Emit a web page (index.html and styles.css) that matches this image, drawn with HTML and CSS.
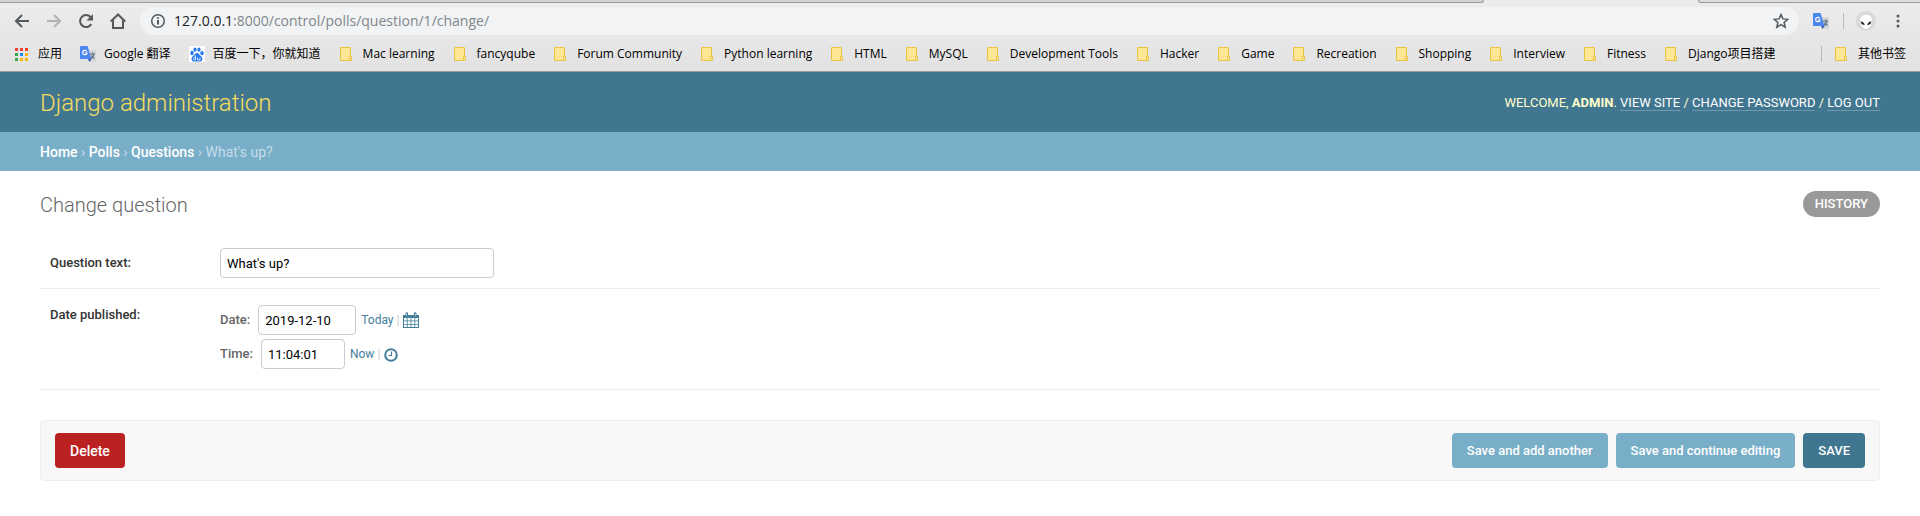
FILE: index.html
```
<!DOCTYPE html>
<html lang="en">
<head>
<meta charset="utf-8">
<title>Change question | Django site admin</title>
<link rel="stylesheet" href="styles.css">
</head>
<body>
<svg class="defs" aria-hidden="true">
  <symbol id="folder" viewBox="0 0 16 16"><path d="M1.500 1.500h10v13h-10z" fill="#ffe694" stroke="#e8c444"/><path d="M10.500 10.500h2v4h-2z" fill="#ffe694" stroke="#e8c444"/></symbol>
  <symbol id="translate" viewBox="0 0 16 16"><path d="M7 4h8.500q.5 0 .5.5v11q0 .5-.5.500H9z" fill="#d4d6d8"/><path d="M1 0h6.500l4 13H1q-1 0-1-1V1q0-1 1-1z" fill="#4a86f0"/><path d="M8 13h3.500L9.500 16z" fill="#3454b4"/><path d="M6.700 5.300A2.200 2.200 0 1 0 7 7H5" fill="none" stroke="#fff" stroke-width="1.200"/><path d="M10 8h5M12.700 6.500V8M14 8q-.8 3-3 4.500M11.500 9.500q1 2 3 3" fill="none" stroke="#587084" stroke-width="1.200"/></symbol>
</svg>
<div class="browser">
  <div class="tabs"><span class="tab-left"></span><span class="tab-right"></span></div>
  <div class="toolbar">
    <button class="tool" aria-label="Back"><svg viewBox="0 0 16 16"><path d="M15 8H2M8 2L2 8l6 6" stroke="#55585c"/></svg></button>
    <button class="tool" aria-label="Forward"><svg viewBox="0 0 16 16"><path d="M1 8h13M8 2l6 6-6 6" stroke="#b0b2b4"/></svg></button>
    <button class="tool" aria-label="Reload"><svg viewBox="0 0 16 16"><path d="M13.300 11A6 6 0 1 1 12.500 4" stroke="#55585c"/><path d="M15 1v6.500H8.500z" fill="#55585c"/></svg></button>
    <button class="tool" aria-label="Home"><svg viewBox="0 0 16 16"><path d="M.8 8.500L8 1.500l7.200 7M3 7v8h10V7" stroke="#55585c"/></svg></button>
    <div class="omnibox">
      <svg class="info" viewBox="0 0 16 16"><circle cx="8" cy="8" r="6.300"/><path d="M8 7v4.500M8 4.200v1.600"/></svg>
      <span class="url"><b>127.0.0.1</b>:8000/control/polls/question/1/change/</span>
      <svg class="star" viewBox="0 0 16 16"><path d="M8 1.500l1.900 4.400 4.800.4-3.600 3.200 1.100 4.700L8 11.700l-4.200 2.500 1.100-4.700L1.300 6.300l4.800-.4z"/></svg>
    </div>
    <svg class="ext" viewBox="0 0 16 16"><use href="#translate"/></svg>
    <span class="divider"></span>
    <svg class="avatar" viewBox="0 0 20 20"><circle cx="10" cy="10" r="10" fill="#d9d9d9"/><path d="M10 4c4 0 6 2 6 5.500 0 4-3 8.500-6 8.500s-6-4.500-6-8.500C4 6 6 4 10 4z" fill="#fff"/><path d="M4.500 10.500q3.500 0 4.300 3.500-3.500 0-4.300-3.500zM15.500 10.500q-3.500 0-4.300 3.500 3.500 0 4.300-3.500z" fill="#222"/></svg>
    <svg class="menu" viewBox="0 0 16 16"><circle cx="8" cy="3" r="1.500"/><circle cx="8" cy="8" r="1.500"/><circle cx="8" cy="13" r="1.500"/></svg>
  </div>
  <nav class="bookmarks">
    <a href="#"><svg viewBox="0 0 16 16"><path d="M1 2h3v3H1zM6 2h3v3H6zM11 2h3v3h-3z" fill="#ea4335"/><path d="M1 7h3v3H1zM1 12h3v3H1z" fill="#34a853"/><path d="M6 7h3v3H6z" fill="#1a8cff"/><path d="M11 7h3v3h-3zM6 12h3v3H6zM11 12h3v3h-3z" fill="#fbb305"/></svg>应用</a>
    <a href="#"><svg><use href="#translate"/></svg>Google 翻译</a>
    <a href="#"><svg viewBox="0 0 16 16"><path d="M0 0h16v16H0z" fill="#fff"/><g fill="#2878ef"><ellipse cx="3" cy="7" rx="1.700" ry="2.200"/><ellipse cx="6" cy="3.600" rx="1.600" ry="2.200"/><ellipse cx="10" cy="3.600" rx="1.600" ry="2.200"/><ellipse cx="13" cy="7.200" rx="1.700" ry="2.100"/><path d="M8 7c2 0 2.500 2 4 3.200 2.500 2 1.500 5.300-1.500 5.300-1 0-4 0-5 0-3 0-4-3.300-1.500-5.300C5.500 9 6 7 8 7z"/></g><path d="M6.500 9.500V14q-2 .3-2-1.300t2-1.200M8.500 11.500V14h2.500v-2.500" fill="none" stroke="#fff" stroke-width=".8"/></svg>百度一下，你就知道</a>
    <a href="#"><svg><use href="#folder"/></svg>Mac learning</a>
    <a href="#"><svg><use href="#folder"/></svg>fancyqube</a>
    <a href="#"><svg><use href="#folder"/></svg>Forum Community</a>
    <a href="#"><svg><use href="#folder"/></svg>Python learning</a>
    <a href="#"><svg><use href="#folder"/></svg>HTML</a>
    <a href="#"><svg><use href="#folder"/></svg>MySQL</a>
    <a href="#"><svg><use href="#folder"/></svg>Development Tools</a>
    <a href="#"><svg><use href="#folder"/></svg>Hacker</a>
    <a href="#"><svg><use href="#folder"/></svg>Game</a>
    <a href="#"><svg><use href="#folder"/></svg>Recreation</a>
    <a href="#"><svg><use href="#folder"/></svg>Shopping</a>
    <a href="#"><svg><use href="#folder"/></svg>Interview</a>
    <a href="#"><svg><use href="#folder"/></svg>Fitness</a>
    <a href="#"><svg><use href="#folder"/></svg>Django项目搭建</a>
    <a href="#" class="other"><svg><use href="#folder"/></svg>其他书签</a>
  </nav>
</div>
<header class="header">
  <h1>Django administration</h1>
  <div class="user-tools">Welcome, <strong>admin</strong>. <a href="#">View site</a> / <a href="#">Change password</a> / <a href="#">Log out</a></div>
</header>
<nav class="breadcrumbs"><a href="#">Home</a> › <a href="#">Polls</a> › <a href="#">Questions</a> › What's up?</nav>
<main class="content">
  <div class="title-row">
    <h2>Change question</h2>
    <a href="#" class="history">History</a>
  </div>
  <form>
    <div class="form-row">
      <label class="field-label" for="question">Question text:</label>
      <input id="question" class="question" type="text" value="What's up?">
    </div>
    <div class="form-row date-row">
      <span class="field-label" id="published">Date published:</span>
      <div class="datetime" role="group" aria-labelledby="published">
        <div class="line"><label for="date">Date:</label><input id="date" class="date" type="text" value="2019-12-10"><span class="shortcuts"><a href="#">Today</a><i>|</i><a href="#" aria-label="Choose a date"><svg viewBox="0 0 16 16"><path d="M0 3h16v13H0z" fill="#447e9b"/><path d="M1 6h2.800v2.500H1zM4.600 6h3v2.500h-3zM8.400 6h3v2.500h-3zM12.200 6H15v2.500h-2.800zM1 9.300h2.800v2.600H1zM4.600 9.300h3v2.600h-3zM8.400 9.300h3v2.600h-3zM12.200 9.300H15v2.600h-2.800zM1 12.700h2.800V15H1zM4.600 12.700h3V15h-3zM8.400 12.700h3V15h-3zM12.200 12.700H15V15h-2.800z" fill="#fff"/><path d="M3 .8h1.500v3.700H3zM11.500.8H13v3.700h-1.500z" fill="#fff" stroke="#447e9b"/></svg></a></span></div>
        <div class="line"><label for="time">Time:</label><input id="time" class="time" type="text" value="11:04:01"><span class="shortcuts"><a href="#">Now</a><i>|</i><a href="#" aria-label="Choose a time"><svg viewBox="0 0 16 16"><circle cx="7" cy="9" r="5.800" fill="none" stroke="#447e9b" stroke-width="2"/><path d="M7.500 5.500v4h-3" fill="none" stroke="#447e9b" stroke-width="1.200"/></svg></a></span></div>
      </div>
    </div>
    <div class="submit-row">
      <button type="button" class="btn delete">Delete</button>
      <button type="button" class="btn">Save and add another</button>
      <button type="button" class="btn">Save and continue editing</button>
      <button type="button" class="btn save">Save</button>
    </div>
  </form>
</main>
</body>
</html>
```
FILE: styles.css
```
* { box-sizing: border-box; }
body { margin: 0; background: #fff; color: #333; font: 14px/20px Roboto, "Noto Sans CJK SC", sans-serif; }
a { color: inherit; text-decoration: none; }
svg { flex: none; }
.defs { position: absolute; width: 0; height: 0; }

.browser { background: linear-gradient(#ececec, #e2e2e2); border-bottom: 1px solid #9c9c9c; font-family: "Open Sans", "Noto Sans CJK SC", sans-serif; color: #000; }
.tabs { display: flex; justify-content: space-between; height: 3px; }
.tab-left { width: 1484px; background: #d2d2d2; border-bottom: 1px solid #9c9c9c; border-right: 1px solid #9c9c9c; border-bottom-right-radius: 4px; }
.tab-right { width: 222px; background: #ddd; border-bottom: 1px solid #9c9c9c; border-left: 1px solid #9c9c9c; border-bottom-left-radius: 4px; }
.toolbar { display: flex; align-items: center; height: 36px; padding: 0 14px; }
.tool { width: 16px; height: 16px; margin-right: 16px; padding: 0; border: 0; background: none; }
.tool svg { display: block; width: 16px; height: 16px; fill: none; stroke-width: 2; }
.omnibox { display: flex; flex: 1; align-items: center; height: 28px; padding: 0 10px; margin-left: -2px; margin-right: 14px; border-radius: 14px; background: #f1f3f4; }
.info { width: 16px; height: 16px; fill: none; stroke: #55585c; stroke-width: 2; }
.info circle { stroke-width: 1.5; }
.url { flex: 1; padding-left: 8px; font-size: 14px; color: #80868b; }
.url b { font-weight: 400; color: #202124; }
.star { width: 16px; height: 16px; fill: none; stroke: #55585c; stroke-width: 1.5; }
.ext { width: 16px; height: 16px; }
.divider { width: 1px; height: 16px; margin: 0 12px 0 14px; background: #bbb; }
.avatar { width: 20px; height: 20px; margin-right: 14px; }
.menu { width: 16px; height: 16px; fill: #55585c; }
.bookmarks { display: flex; align-items: center; gap: 18px; height: 32px; padding: 0 14px 2px; font-size: 12px; line-height: 20px; white-space: nowrap; }
.bookmarks a { display: flex; align-items: center; gap: 8px; }
.bookmarks svg { width: 16px; height: 16px; }
.bookmarks .other { margin-left: auto; padding-left: 12px; border-left: 1px solid #bbb; height: 16px; }

.header { display: flex; align-items: center; justify-content: space-between; padding: 17px 40px 15px; background: #417690; color: #ffc; }
.header h1 { margin: 0; font-size: 24px; font-weight: 300; line-height: 28px; color: #f5dd5d; }
.user-tools { font-size: 13px; text-transform: uppercase; }
.user-tools a { color: #fff; border-bottom: 1px solid rgba(255,255,255,.25); }
.breadcrumbs { padding: 10px 40px 9px; background: #79aec8; color: #c4dce8; }
.breadcrumbs a { color: #fff; font-weight: 500; }
.content { padding: 20px 40px; }
.title-row { display: flex; align-items: flex-start; justify-content: space-between; padding-bottom: 22px; }
.title-row h2 { margin: 0; padding-top: 2px; font-size: 20px; line-height: 24px; font-weight: 300; color: #666; }
.history { padding: 3px 12px; border-radius: 15px; background: #999; color: #fff; font-size: 13px; font-weight: 500; text-transform: uppercase; }
.form-row { display: flex; align-items: center; padding: 9px 10px 10px; border-bottom: 1px solid #eee; font-size: 13px; }
.field-label { width: 170px; font-weight: 500; color: #333; }
.form-row input { height: 30px; padding: 5px 6px; border: 1px solid #ccc; border-radius: 4px; background: #fff; color: #000; font: 13px Roboto, sans-serif; }
.form-row .question { width: 274px; }
.date-row { align-items: flex-start; padding: 16px 10px 20px; }
.datetime { display: flex; flex-direction: column; gap: 4px; }
.line { display: flex; align-items: center; color: #666; font-weight: 500; }
.line label { margin-right: 8px; }
.form-row .date { width: 98px; }
.form-row .time { width: 84px; }
.shortcuts { display: flex; align-items: center; margin-left: 5px; font-size: 12px; font-weight: 400; color: #447e9b; }
.shortcuts i { margin: 0 4px 0 3px; font-style: normal; color: #ccc; }
.shortcuts svg { display: block; width: 16px; height: 16px; }
.submit-row { display: flex; gap: 8px; margin-top: 30px; padding: 12px 14px; border: 1px solid #eee; border-radius: 4px; background: #f8f8f8; }
.btn { height: 35px; padding: 0 15px; border: 0; border-radius: 4px; background: #79aec8; color: #fff; font: 500 13px Roboto, sans-serif; }
.delete { margin-right: auto; background: #ba2121; font-size: 14px; }
.save { background: #417690; text-transform: uppercase; }
```
